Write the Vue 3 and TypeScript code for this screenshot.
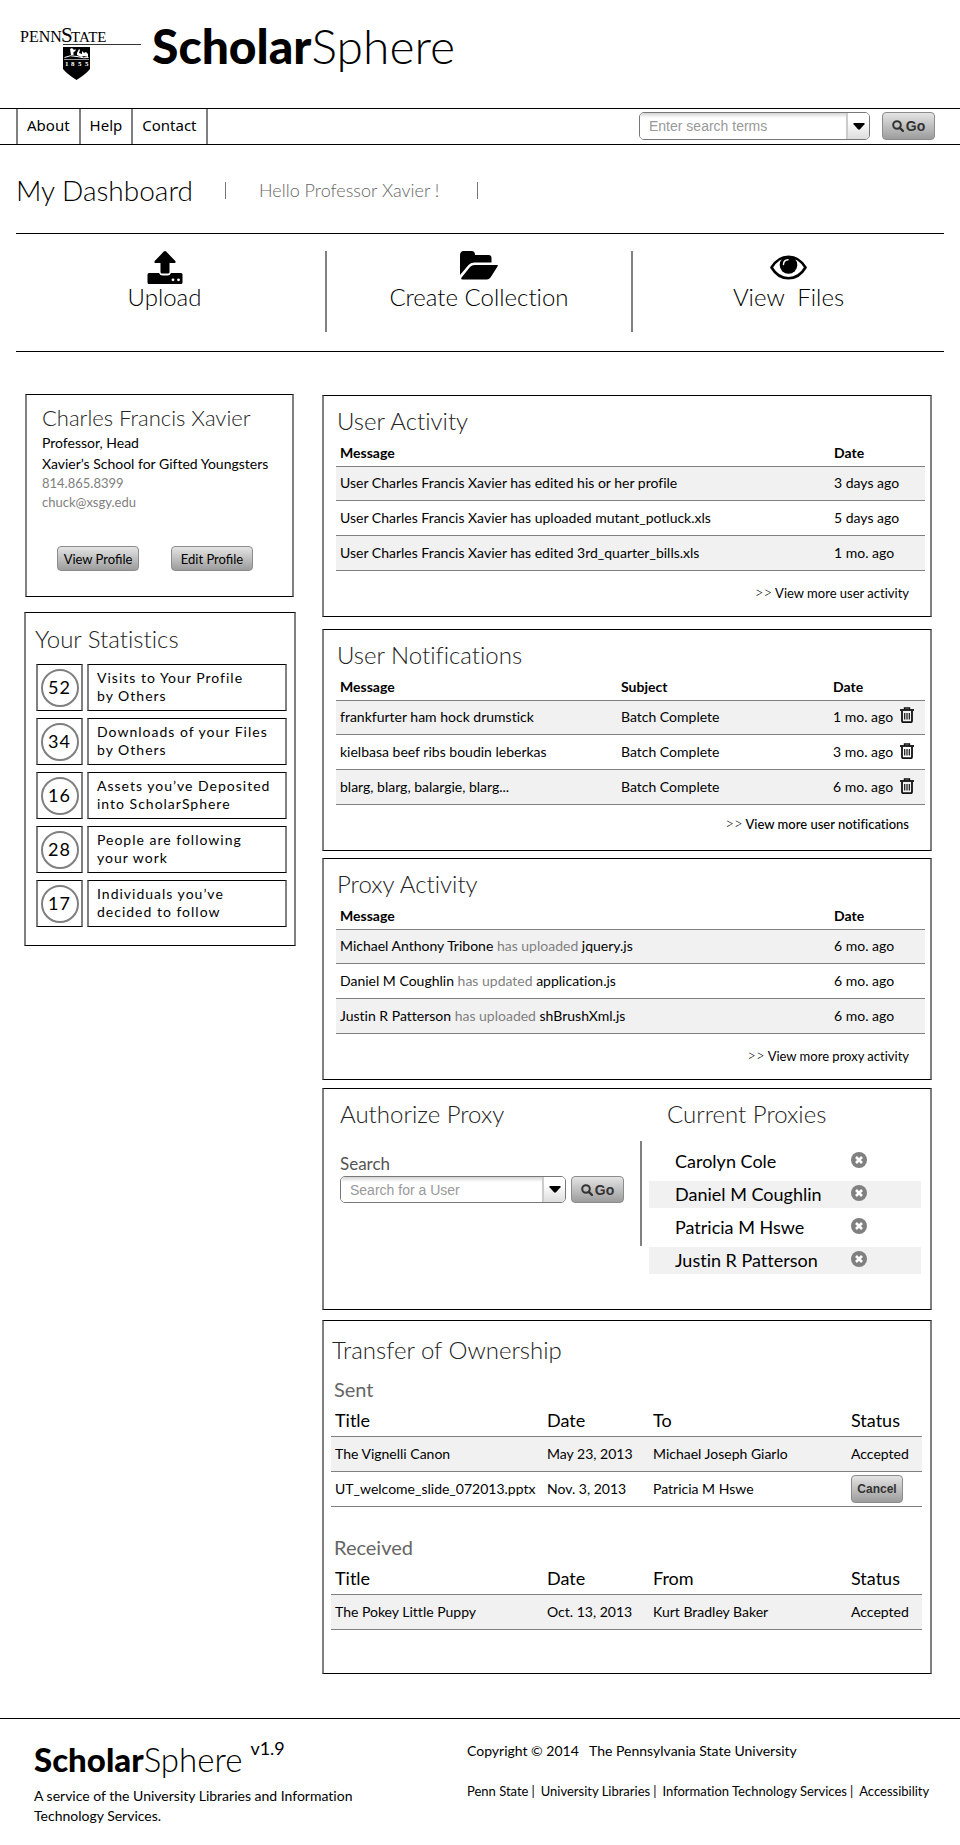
<script setup lang="ts">
import { ref } from 'vue'

interface Stat { value: number; lines: [string, string] }
interface Activity { message: string; date: string }
interface Notice { message: string; subject: string; date: string }
interface ProxyEvent { who: string; action: string; file: string; date: string }
interface Transfer { title: string; date: string; person: string; status: string }

const navLinks: string[] = ['About', 'Help', 'Contact']

const stats: Stat[] = [
  { value: 52, lines: ['Visits to Your Profile', 'by Others'] },
  { value: 34, lines: ['Downloads of your Files', 'by Others'] },
  { value: 16, lines: ['Assets you’ve Deposited', 'into ScholarSphere'] },
  { value: 28, lines: ['People are following', 'your work'] },
  { value: 17, lines: ['Individuals you’ve', 'decided to follow'] },
]

const activities: Activity[] = [
  { message: 'User Charles Francis Xavier has edited his or her profile', date: '3 days ago' },
  { message: 'User Charles Francis Xavier has uploaded mutant_potluck.xls', date: '5 days ago' },
  { message: 'User Charles Francis Xavier has edited 3rd_quarter_bills.xls', date: '1 mo. ago' },
]

const notices = ref<Notice[]>([
  { message: 'frankfurter ham hock drumstick', subject: 'Batch Complete', date: '1 mo. ago' },
  { message: 'kielbasa beef ribs boudin leberkas', subject: 'Batch Complete', date: '3 mo. ago' },
  { message: 'blarg, blarg, balargie, blarg...', subject: 'Batch Complete', date: '6 mo. ago' },
])

const proxyEvents: ProxyEvent[] = [
  { who: 'Michael Anthony Tribone', action: 'has uploaded', file: 'jquery.js', date: '6 mo. ago' },
  { who: 'Daniel M Coughlin', action: 'has updated', file: 'application.js', date: '6 mo. ago' },
  { who: 'Justin R Patterson', action: 'has uploaded', file: 'shBrushXml.js', date: '6 mo. ago' },
]

const proxies = ref<string[]>(['Carolyn Cole', 'Daniel M Coughlin', 'Patricia M Hswe', 'Justin R Patterson'])

const transfers: { heading: string; personLabel: string; rows: Transfer[] }[] = [
  {
    heading: 'Sent',
    personLabel: 'To',
    rows: [
      { title: 'The Vignelli Canon', date: 'May 23, 2013', person: 'Michael Joseph Giarlo', status: 'Accepted' },
      { title: 'UT_welcome_slide_072013.pptx', date: 'Nov. 3, 2013', person: 'Patricia M Hswe', status: 'Pending' },
    ],
  },
  {
    heading: 'Received',
    personLabel: 'From',
    rows: [
      { title: 'The Pokey Little Puppy', date: 'Oct. 13, 2013', person: 'Kurt Bradley Baker', status: 'Accepted' },
    ],
  },
]

const footerLinks: string[] = ['Penn State', 'University Libraries', 'Information Technology Services', 'Accessibility']

const searchTerms = ref('')
const userQuery = ref('')
</script>

<template>
  <div class="page">
    <header class="masthead">
      <svg class="psu" width="122" height="58" viewBox="0 0 122 58" role="img" aria-label="Penn State 1855">
        <g class="psu-name">
          <text x="0" y="19" font-size="16">PENN</text>
          <text x="41" y="19" font-size="21">S</text>
          <text x="51" y="19" font-size="15">TATE</text>
        </g>
        <path d="M43 21.5H121" stroke="#333" stroke-width="1" />
        <path d="M43 24H70V46Q66 51 56.500 57Q47 51 43 46Z" fill="#000" />
        <path d="M44.500 34.500Q50 31.500 57 33.500T68.500 34.500" fill="none" stroke="#fff" stroke-width="1" />
        <path d="M50 26l2-1 2 2 1.500-1v2l-2 1v3h-2.500l-.5-3zM57 30l2-4 1 1-1 3 3 1 0-3 2 2 2-1 2 2v3l-4-1-3 1-4-2z" fill="#fff" />
        <path d="M44 36.500H69" stroke="#fff" stroke-width=".6" />
        <text class="psu-year" x="45" y="43" font-size="7">1</text>
        <text class="psu-year" x="51" y="43" font-size="7">8</text>
        <text class="psu-year" x="58" y="43" font-size="7">5</text>
        <text class="psu-year" x="65" y="43" font-size="7">5</text>
      </svg>
      <div class="brand"><b>Scholar</b>Sphere</div>
    </header>

    <nav class="navbar" aria-label="Main">
      <ul class="nav-links">
        <li v-for="link in navLinks" :key="link"><a href="#">{{ link }}</a></li>
      </ul>
      <form class="search" @submit.prevent>
        <div class="combo">
          <input v-model="searchTerms" type="text" aria-label="Search terms" placeholder="Enter search terms" />
          <button type="button" class="combo-toggle" aria-label="Search options">
            <svg width="12" height="7" viewBox="0 0 12 7"><path d="M1 0H11Q12 .5 11.500 1.200L7 6.300Q6 7.200 5 6.300L.5 1.200Q0 .5 1 0Z" /></svg>
          </button>
        </div>
        <button type="submit" class="btn btn-go">
          <svg width="12" height="12" viewBox="0 0 12 12" fill="none" stroke="#333" stroke-width="2"><circle cx="5" cy="5" r="3.800" /><path d="M7.800 7.800L11 11" stroke-width="2.400" stroke-linecap="round" /></svg>Go
        </button>
      </form>
    </nav>

    <div class="welcome">
      <h1>My Dashboard</h1>
      <p>Hello Professor Xavier !</p>
    </div>

    <div class="actions">
      <a href="#" class="action">
        <svg width="36" height="34" viewBox="0 0 36 34">
          <path d="M18 0Q18.600 0 19.200.6L28.300 10Q29.200 11.800 27.500 12H22.500V21Q22.500 22.500 21 22.500H15Q13.500 22.500 13.500 21V12H8.500Q6.800 11.800 7.700 10L16.800.6Q17.400 0 18 0Z" />
          <path d="M2 22H12Q13 24.500 15.500 24.500H20.500Q23 24.500 24 22H34Q35.500 22 35.500 23.500V31.500Q35.500 33 34 33H2Q.5 33 .5 31.500V23.500Q.5 22 2 22Z" />
          <circle cx="26" cy="28.800" r="1.400" fill="#fff" /><circle cx="31.500" cy="28.800" r="1.400" fill="#fff" />
        </svg>
        <span>Upload</span>
      </a>
      <a href="#" class="action">
        <svg width="38" height="34" viewBox="0 0 38 34">
          <path d="M0 24V4.500Q0 0 3.500 0H11.500Q15 0 15 4V4H28.500Q31.500 4 31.500 7V11.500H14Q10.500 11.500 8.500 14Z" />
          <path d="M14.500 14H37Q38.500 14 37.500 15.500L30.500 26.500Q29 28.500 27 28.500H2.500Q.5 28.500 1.600 26.600L10 16Q12 14 14.500 14Z" />
        </svg>
        <span>Create Collection</span>
      </a>
      <a href="#" class="action">
        <svg width="37" height="34" viewBox="0 0 37 34">
          <path d="M1.500 16.500Q8 5.700 18.500 5.700T35.500 16.500Q29 27.300 18.500 27.300T1.500 16.500Z" fill="none" stroke="#000" stroke-width="2.600" stroke-linejoin="round" />
          <circle cx="18.500" cy="14" r="8.800" />
          <path d="M13.500 13.500Q13.500 9 18 8.700" fill="none" stroke="#fff" stroke-width="1.400" stroke-linecap="round" />
        </svg>
        <span>View&nbsp; Files</span>
      </a>
    </div>

    <div class="columns">
      <aside class="sidebar">
        <section class="card profile">
          <h2>Charles Francis Xavier</h2>
          <p>Professor, Head</p>
          <p>Xavier’s School for Gifted Youngsters</p>
          <p class="contact">814.865.8399</p>
          <p class="contact">chuck@xsgy.edu</p>
          <div class="profile-buttons">
            <button type="button" class="btn btn-profile">View Profile</button>
            <button type="button" class="btn btn-profile">Edit Profile</button>
          </div>
        </section>

        <section class="card stats">
          <h2>Your Statistics</h2>
          <ul>
            <li v-for="s in stats" :key="s.value">
              <div class="stat-count"><span>{{ s.value }}</span></div>
              <div class="stat-label">{{ s.lines[0] }}<br />{{ s.lines[1] }}</div>
            </li>
          </ul>
        </section>
      </aside>

      <main class="panels">
        <section class="card panel">
          <h2>User Activity</h2>
          <table class="log">
            <colgroup><col /><col class="c-date" /></colgroup>
            <thead><tr><th>Message</th><th>Date</th></tr></thead>
            <tbody>
              <tr v-for="a in activities" :key="a.message"><td>{{ a.message }}</td><td>{{ a.date }}</td></tr>
            </tbody>
          </table>
          <a href="#" class="more"><i>&gt;&gt;</i> View more user activity</a>
        </section>

        <section class="card panel notices">
          <h2>User Notifications</h2>
          <table class="log">
            <colgroup><col /><col class="c-subject" /><col class="c-when" /><col class="c-trash" /></colgroup>
            <thead><tr><th>Message</th><th>Subject</th><th>Date</th><th></th></tr></thead>
            <tbody>
              <tr v-for="(n, i) in notices" :key="n.message">
                <td>{{ n.message }}</td>
                <td>{{ n.subject }}</td>
                <td>{{ n.date }}</td>
                <td>
                  <button type="button" class="icon-btn" :aria-label="'Delete ' + n.message" @click="notices.splice(i, 1)">
                    <svg width="14" height="16" viewBox="0 0 14 16" fill="none" stroke="#111">
                      <path d="M0 3H14" stroke-width="1.800" /><path d="M4.500 2.800V1H9.500V2.800" stroke-width="1.400" />
                      <path d="M2 3.500V14Q2 15.200 3.200 15.200H10.800Q12 15.200 12 14V3.500" stroke-width="1.800" />
                      <path d="M4.700 6V12.500M7 6V12.500M9.300 6V12.500" stroke-width="1.200" />
                    </svg>
                  </button>
                </td>
              </tr>
            </tbody>
          </table>
          <a href="#" class="more"><i>&gt;&gt;</i> View more user notifications</a>
        </section>

        <section class="card panel">
          <h2>Proxy Activity</h2>
          <table class="log">
            <colgroup><col /><col class="c-date" /></colgroup>
            <thead><tr><th>Message</th><th>Date</th></tr></thead>
            <tbody>
              <tr v-for="p in proxyEvents" :key="p.who">
                <td>{{ p.who }} <em>{{ p.action }}</em> {{ p.file }}</td><td>{{ p.date }}</td>
              </tr>
            </tbody>
          </table>
          <a href="#" class="more"><i>&gt;&gt;</i> View more proxy activity</a>
        </section>

        <section class="card proxy">
          <form class="authorize" @submit.prevent>
            <h2>Authorize Proxy</h2>
            <label for="user-query">Search</label>
            <div class="search">
              <div class="combo">
                <input id="user-query" v-model="userQuery" type="text" placeholder="Search for a User" />
                <button type="button" class="combo-toggle" aria-label="Search options">
                  <svg width="12" height="7" viewBox="0 0 12 7"><path d="M1 0H11Q12 .5 11.500 1.200L7 6.300Q6 7.200 5 6.300L.5 1.200Q0 .5 1 0Z" /></svg>
                </button>
              </div>
              <button type="submit" class="btn btn-go">
                <svg width="12" height="12" viewBox="0 0 12 12" fill="none" stroke="#333" stroke-width="2"><circle cx="5" cy="5" r="3.800" /><path d="M7.800 7.800L11 11" stroke-width="2.400" stroke-linecap="round" /></svg>Go
              </button>
            </div>
          </form>
          <div class="current">
            <h2>Current Proxies</h2>
            <ul>
              <li v-for="(name, i) in proxies" :key="name">
                <span>{{ name }}</span>
                <button type="button" class="icon-btn" :aria-label="'Remove ' + name" @click="proxies.splice(i, 1)">
                  <svg width="16" height="16" viewBox="0 0 16 16"><circle cx="8" cy="8" r="8" fill="#808080" /><path d="M5 5L11 11M11 5L5 11" stroke="#fff" stroke-width="2.600" /></svg>
                </button>
              </li>
            </ul>
          </div>
        </section>

        <section class="card transfer">
          <h2>Transfer of Ownership</h2>
          <template v-for="t in transfers" :key="t.heading">
            <h3>{{ t.heading }}</h3>
            <table class="log">
              <colgroup><col /><col class="t-date" /><col class="t-person" /><col class="t-status" /></colgroup>
              <thead><tr><th>Title</th><th>Date</th><th>{{ t.personLabel }}</th><th>Status</th></tr></thead>
              <tbody>
                <tr v-for="r in t.rows" :key="r.title">
                  <td>{{ r.title }}</td>
                  <td>{{ r.date }}</td>
                  <td>{{ r.person }}</td>
                  <td>
                    <button v-if="r.status === 'Pending'" type="button" class="btn btn-cancel">Cancel</button>
                    <template v-else>{{ r.status }}</template>
                  </td>
                </tr>
              </tbody>
            </table>
          </template>
        </section>
      </main>
    </div>

    <footer class="footer">
      <div>
        <div class="footer-brand"><span><b>Scholar</b>Sphere</span><small>v1.9</small></div>
        <p class="tagline">A service of the University Libraries and Information Technology Services.</p>
      </div>
      <div class="legal">
        <p>Copyright © 2014 &nbsp; The Pennsylvania State University</p>
        <ul>
          <li v-for="l in footerLinks" :key="l"><a href="#">{{ l }}</a></li>
        </ul>
      </div>
    </footer>
  </div>
</template>

<style>
body { background: #fff; }
</style>

<style scoped>
.page { font-family: Lato, "Liberation Sans", sans-serif; font-size: 14px; line-height: 20px; color: #000; font-variant-ligatures: none; }
.page *, .page *::before { box-sizing: border-box; }
h1, h2, h3, p, ul { margin: 0; padding: 0; font-weight: 400; }
ul { list-style: none; }
a { color: inherit; text-decoration: none; }
button, input { font-family: inherit; color: inherit; margin: 0; }
button { cursor: pointer; }

.masthead { display: flex; align-items: flex-start; gap: 10px; height: 108px; padding: 23px 20px 0; }
.psu-name { font-family: "Liberation Serif", serif; }
.psu-year { font-family: "Liberation Serif", serif; font-weight: 700; fill: #fff; }
.brand { font-size: 48px; line-height: 46px; font-weight: 300; }
.brand b, .footer-brand b { font-weight: 900; }

.navbar { display: flex; justify-content: space-between; align-items: stretch; border: solid #000; border-width: 1px 0; padding: 0 25px 0 16px; min-height: 37px; }
.navbar .search { padding-bottom: 1px; }
.nav-links { display: flex; border-left: 2px solid #808080; }
.nav-links li { border-right: 2px solid #808080; }
.nav-links a { display: block; padding: 0 9px; font: 15px/33px "Noto Sans", sans-serif; }
.search { display: flex; align-items: center; gap: 12px; }
.combo { display: flex; width: 231px; height: 28px; border: 1px solid #777; border-radius: 5px; overflow: hidden; }
.combo input { flex: 1; min-width: 0; border: 0; padding: 0 9px; outline: 0; font: 14px "Liberation Sans", sans-serif; background: linear-gradient(#d4d4d4, #fff 5px); }
.combo input::placeholder { color: #999; opacity: 1; }
.combo-toggle { flex: none; width: 23px; padding: 0; border: 0; border-left: 2px solid #ccc; background: linear-gradient(#fff 30%, #ddd); }
.combo-toggle svg { display: block; margin: 0 auto; }
.btn { border: 1px solid #8c8c8c; border-radius: 4px; background: linear-gradient(#e4e4e4, #9c9c9c); padding: 0; }
.btn-go { display: flex; align-items: center; justify-content: center; gap: 2px; width: 53px; height: 28px; color: #333; font: bold 14px "Liberation Sans", sans-serif; }

.welcome { display: flex; align-items: center; padding: 28px 16px 25px; }
.welcome h1 { width: 209px; font-size: 28px; line-height: 35px; font-weight: 300; }
.welcome p { display: flex; align-items: center; font-size: 18px; line-height: 35px; font-weight: 300; color: #666; }
.welcome p::before, .welcome p::after { content: ""; width: 1px; height: 17px; background: #777; }
.welcome p::before { margin-right: 33px; }
.welcome p::after { margin-left: 38px; }

.actions { display: grid; grid-template-columns: 311fr 306fr 311fr; margin: 0 16px; padding: 17px 0 19px; border: solid #000; border-width: 1px 0; }
.action { display: flex; flex-direction: column; align-items: center; height: 81px; font-size: 24px; line-height: 24px; font-weight: 300; }
.action:not(:last-child) { border-right: 2px solid #808080; }
.action:first-child { padding-right: 12px; }

.columns { display: grid; grid-template-columns: 272px minmax(0, 1fr); gap: 26px; align-items: start; padding: 42px 28px 0 24px; }
.card { border: solid; border-width: 1px 2px; border-color: #000 #808080; }
.card h2 { font-size: 24px; line-height: 30px; font-weight: 300; color: #222; }

.sidebar { display: grid; gap: 15px; }
.profile { margin: 0 2px 0 1px; padding: 9px 14px 25px 15px; }
.card.profile h2 { font-size: 22px; line-height: 28px; }
.profile p { line-height: 21px; white-space: nowrap; }
.profile .contact { font-size: 13px; line-height: 19px; color: #808080; }
.profile-buttons { display: flex; gap: 32px; margin-top: 34px; padding-left: 15px; }
.btn-profile { width: 82px; height: 25px; font-size: 13px; line-height: 20px; }
.stats { padding: 11px 7px 18px 9px; }
.stats ul { display: grid; gap: 7px; margin-top: 10px; padding-left: 1px; }
.stats li { display: grid; grid-template-columns: 47px 1fr; gap: 4px; }
.stat-count, .stat-label { border: solid; border-width: 1px 2px; border-color: #000 #808080; height: 47px; }
.stat-count { display: grid; place-items: center; }
.stat-count span { width: 38px; height: 38px; border: 2px solid #808080; border-radius: 50%; text-align: center; font-size: 18px; line-height: 33px; letter-spacing: 1px; }
.stat-label { padding: 4px 8px; line-height: 18px; letter-spacing: 1px; white-space: nowrap; }

.panels { display: flex; flex-direction: column; padding-top: 1px; }
.panel { display: flex; flex-direction: column; padding: 10px 5px 13px 12px; margin-bottom: 12px; }
.panel h2 { padding-left: 1px; }
.log { width: 100%; border-collapse: separate; border-spacing: 0; table-layout: fixed; }
.log th, .log td { padding: 0 0 0 4px; text-align: left; border-bottom: 1px solid #808080; white-space: nowrap; }
.log th { padding-top: 4px; line-height: 26px; font-weight: 700; }
.log td { height: 35px; }
.panel .log tr:first-child td { height: 34px; padding-bottom: 2px; }
.log tbody tr:nth-child(odd) { background: #f1f1f1; }
.log em { font-style: normal; color: #808080; }
.c-date { width: 95px; }
.c-subject { width: 212px; }
.c-when { width: 67px; }
.c-trash { width: 29px; }
.more { align-self: flex-end; margin: 12px 16px 0 0; font-size: 13px; }
.more i { font-style: normal; font-weight: 300; font-size: 15px; line-height: 16px; }
.notices { padding-bottom: 16px; margin-bottom: 7px; }
.notices .more { margin-top: 9px; font-weight: 500; }
.panel:nth-child(3) { margin-bottom: 8px; }
.icon-btn { display: block; padding: 0; border: 0; background: none; }

.proxy { display: grid; grid-template-columns: 316px 1fr; min-height: 222px; padding: 10px 9px 35px 0; margin-bottom: 10px; }
.authorize { padding-left: 16px; }
.authorize label { display: block; margin-top: 23px; font-size: 17px; line-height: 24px; color: #555; }
.authorize .search { gap: 5px; }
.authorize .combo { width: 226px; height: 27px; }
.authorize .btn-go { height: 27px; }
.current { display: grid; }
.current h2 { padding-left: 27px; }
.current ul { display: grid; gap: 6px; margin-top: 11px; padding: 7px 0 0 9px; background: linear-gradient(#808080, #808080) 0 0 / 2px 105px no-repeat; }
.current li { display: flex; align-items: center; padding-left: 26px; font-size: 18px; line-height: 27px; }
.current li:nth-child(even) { background: #f1f1f1; }
.current li span { width: 176px; }

.transfer { padding: 14px 8px 43px 7px; }
.transfer h2 { padding-left: 1px; }
.transfer h3 { padding-left: 3px; font-size: 20px; line-height: 32px; margin-top: 8px; color: #666; }
.transfer .log + h3 { margin-top: 24px; }
.transfer .log th { padding-top: 0; padding-bottom: 1px; font-size: 18px; line-height: 30px; font-weight: 400; }
.t-date { width: 106px; }
.t-person { width: 198px; }
.t-status { width: 75px; }
.btn-cancel { display: block; width: 52px; height: 28px; color: #333; font: bold 12px "Liberation Sans", sans-serif; }

.footer { display: grid; grid-template-columns: 433px 1fr; margin-top: 44px; padding: 20px 24px 20px 34px; border-top: 1px solid #000; }
.footer-brand { display: flex; align-items: flex-start; gap: 8px; font-size: 33px; line-height: 40px; font-weight: 300; }
.footer-brand small { font-size: 18px; line-height: 18px; font-weight: 400; }
.tagline { max-width: 330px; margin-top: 7px; }
.legal p { line-height: 24px; }
.legal ul { display: flex; margin-top: 18px; font-size: 13px; white-space: nowrap; }
.legal li + li::before { content: "|"; padding: 0 6px 0 3px; }
</style>
